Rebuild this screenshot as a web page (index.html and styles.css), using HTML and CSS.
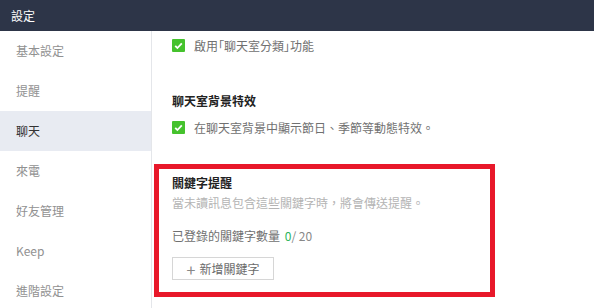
FILE: index.html
```html
<!DOCTYPE html>
<html>
<head>
    <link rel="stylesheet" href="styles.css">
</head>
<body>
    <div class="header">設定</div>
    <div class="main">
        <div class="sidebar">
            <div class="nav-item">基本設定</div>
            <div class="nav-item">提醒</div>
            <div class="nav-item active">聊天</div>
            <div class="nav-item">來電</div>
            <div class="nav-item">好友管理</div>
            <div class="nav-item">Keep</div>
            <div class="nav-item">進階設定</div>
        </div>
        <div class="content">
            <div class="check-row">
                <span class="checkbox">
                    <svg width="13" height="13" viewBox="0 0 13 13"><path d="M3.2 6.8 L5.4 9 L9.8 4.4" fill="none" stroke="#fff" stroke-width="1.8"/></svg>
                </span>
                <span>啟用<span class="punct">「</span>聊天室分類<span class="punct">」</span>功能</span>
            </div>

            <div class="section-title gap-top">聊天室背景特效</div>
            <div class="check-row row-2">
                <span class="checkbox">
                    <svg width="13" height="13" viewBox="0 0 13 13"><path d="M3.2 6.8 L5.4 9 L9.8 4.4" fill="none" stroke="#fff" stroke-width="1.8"/></svg>
                </span>
                <span>在聊天室背景中顯示節日、季節等動態特效。</span>
            </div>

            <div class="keyword-section">
                <div class="highlight"></div>
                <div class="section-title">關鍵字提醒</div>
                <div class="desc">當未讀訊息包含這些關鍵字時，將會傳送提醒。</div>
                <div class="count">已登錄的關鍵字數量 <span class="num">0</span><span class="total">/ 20</span></div>
                <button class="add-btn"><span class="plus">+</span>新增關鍵字</button>
            </div>
        </div>
    </div>
</body>
</html>
```

FILE: styles.css
```css
body {
    margin: 0;
    font-family: "Noto Sans CJK TC", "Liberation Sans", sans-serif;
    font-size: 12px;
    background: #fff;
    overflow: hidden;
}

.header {
    height: 31px;
    line-height: 31px;
    padding-left: 11px;
    background-color: #2d3548;
    color: #fff;
    font-size: 12px;
}

.main {
    display: flex;
    height: 277px;
}

.sidebar {
    width: 151px;
    border-right: 1px solid #e4e6ea;
    flex-shrink: 0;
}

.nav-item {
    height: 40px;
    line-height: 40px;
    padding-left: 16px;
    color: #919191;
}

.nav-item.active {
    background-color: #e8ebf2;
    color: #333;
}

.content {
    flex: 1;
    padding: 4px 0 0 20px;
}

.check-row {
    display: flex;
    align-items: center;
    height: 20px;
    color: #707070;
}

.row-2 {
    margin-top: 6px;
}

.checkbox {
    width: 13px;
    height: 13px;
    background-color: #45c22d;
    border-radius: 1px;
    margin-right: 9px;
    display: flex;
}

.punct {
    font-feature-settings: "palt";
}

.section-title {
    line-height: 20px;
    font-weight: bold;
    color: #222;
}

.gap-top {
    margin-top: 36px;
}

.keyword-section {
    position: relative;
    margin-top: 36px;
}

.highlight {
    position: absolute;
    left: -18px;
    top: -9px;
    width: 341px;
    height: 133px;
    box-sizing: border-box;
    border: 5px solid #e8182a;
}

.desc {
    line-height: 20px;
    color: #b4b4b4;
}

.count {
    margin-top: 13px;
    line-height: 20px;
    color: #707070;
}

.num {
    color: #2bb55a;
    margin-left: 2px;
}

.total {
    color: #888;
}

.add-btn {
    margin-top: 11px;
    width: 102px;
    height: 23px;
    background: #fff;
    border: 1px solid #d6d6d6;
    color: #6a6a6a;
    font-family: inherit;
    font-size: 12px;
    padding: 0;
    display: flex;
    align-items: center;
    justify-content: center;
}

.plus {
    font-size: 16px;
    color: #888;
    margin-right: 4px;
    line-height: 1;
}
```
